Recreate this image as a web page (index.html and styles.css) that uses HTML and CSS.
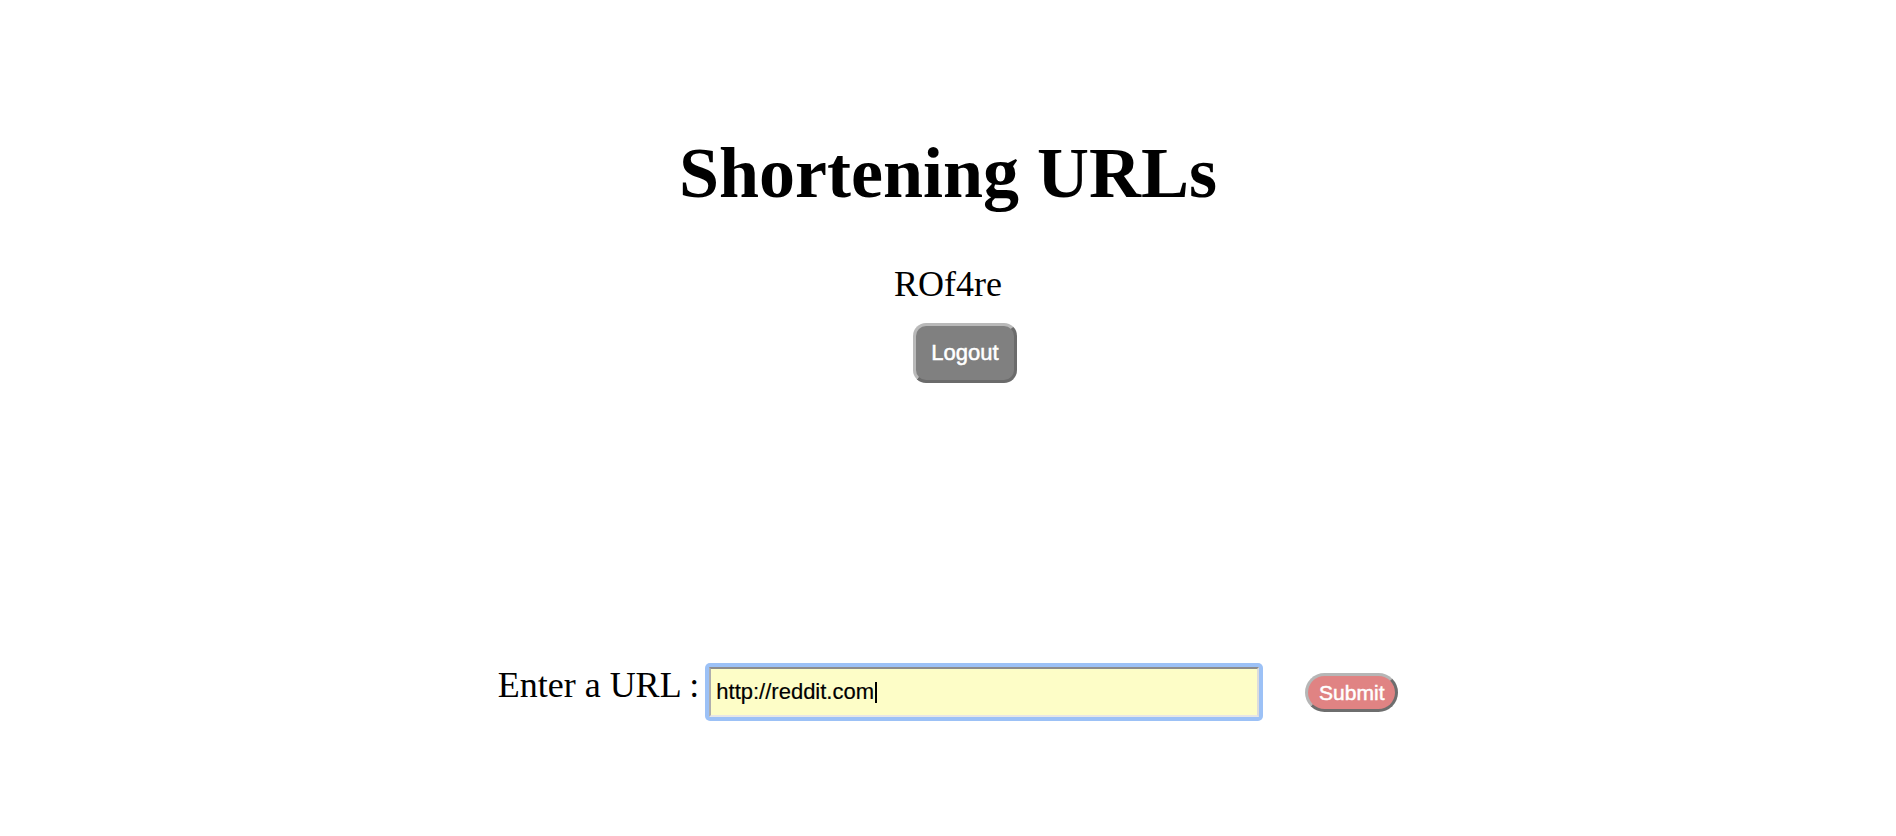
FILE: index.html
```html
<!DOCTYPE html>
<html lang="en">
<head>
<meta charset="utf-8">
<title>Shortening URLs</title>
<link rel="stylesheet" href="styles.css">
</head>
<body>
<main class="page">
  <h1 class="title">Shortening URLs</h1>
  <div class="user">ROf4re</div>
  <button class="logout" type="button">Logout</button>
  <form class="url-row">
    <label class="url-label">Enter a URL :</label>
    <div class="focus-ring">
      <div class="url-field" role="textbox">http://reddit.com<span class="caret"></span></div>
    </div>
    <button class="submit" type="button">Submit</button>
  </form>
</main>
</body>
</html>
```

FILE: styles.css
```css
html, body {
  margin: 0;
  padding: 0;
  background: #ffffff;
}

.page {
  display: flex;
  flex-direction: column;
  align-items: center;
  padding-top: 133px;
  font-family: "Liberation Serif", "Times New Roman", serif;
  color: #000;
}

.title {
  margin: 0;
  font-size: 72px;
  line-height: 80px;
  font-weight: bold;
}

.user {
  margin-top: 51px;
  font-size: 36px;
  line-height: 40px;
}

.logout {
  margin-top: 19px;
  margin-left: 34px;
  box-sizing: border-box;
  width: 104px;
  height: 60px;
  padding: 0;
  border: 3px solid;
  border-color: #b9b9b9 #6b6b6b #6b6b6b #b9b9b9;
  border-radius: 13px;
  background: #808080;
  color: #ffffff;
  font-family: "Liberation Sans", Arial, sans-serif;
  font-size: 22px;
  line-height: 54px;
  -webkit-text-stroke: 0.5px #ffffff;
}

.url-row {
  display: flex;
  align-items: flex-start;
  margin: 282px 0 0 0;
}

.url-label {
  font-size: 36px;
  line-height: 40px;
  margin-right: 6px;
}

.focus-ring {
  margin-top: -2px;
  padding: 4px;
  border-radius: 5px;
  background: #9cc1f6;
}

.url-field {
  box-sizing: border-box;
  width: 550px;
  height: 50px;
  padding: 0 5px;
  border: 2px solid;
  border-color: #8c8c8c #dcdcdc #e6e6e6 #aeaeae;
  background: #fdfdc7;
  display: flex;
  align-items: center;
  font-family: "Liberation Sans", Arial, sans-serif;
  font-size: 22px;
  color: #000;
  -webkit-text-stroke: 0.2px #000;
}

.caret {
  display: inline-block;
  width: 2px;
  height: 21px;
  margin-left: 1px;
  background: #000;
}

.submit {
  margin-top: 8px;
  margin-left: 42px;
  box-sizing: border-box;
  width: 93px;
  height: 39px;
  padding: 0;
  border: 3px solid;
  border-color: #b6b6b6 #6e6e6e #6e6e6e #b6b6b6;
  border-radius: 20px;
  background: #e08383;
  color: #ffffff;
  font-family: "Liberation Sans", Arial, sans-serif;
  font-size: 21px;
  line-height: 33px;
  -webkit-text-stroke: 0.5px #ffffff;
}
```
